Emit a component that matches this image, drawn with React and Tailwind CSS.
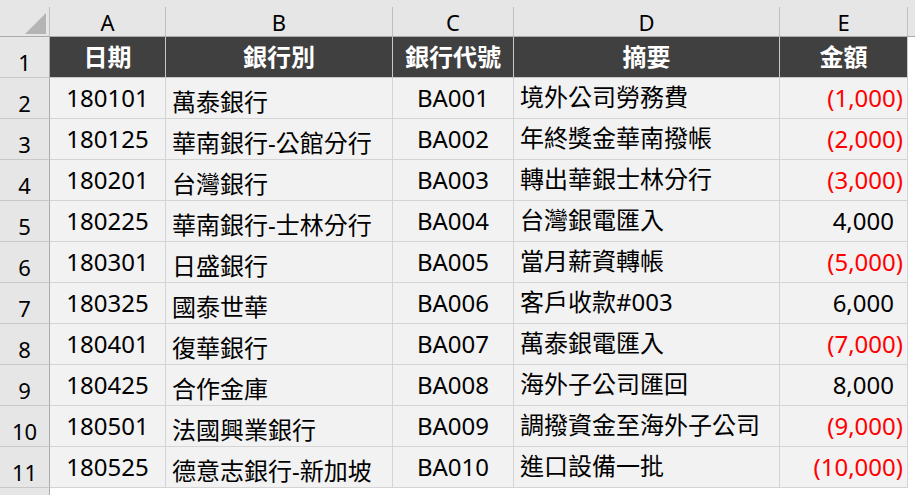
const columns = [
  { key: 'A', width: 'w-[116px]', title: '日期' },
  { key: 'B', width: 'w-[227px]', title: '銀行別' },
  { key: 'C', width: 'w-[121px]', title: '銀行代號' },
  { key: 'D', width: 'w-[266px]', title: '摘要' },
  { key: 'E', width: 'w-[128px]', title: '金額' },
];

const rows = [
  ['180101', '萬泰銀行', 'BA001', '境外公司勞務費', -1000],
  ['180125', '華南銀行-公館分行', 'BA002', '年終獎金華南撥帳', -2000],
  ['180201', '台灣銀行', 'BA003', '轉出華銀士林分行', -3000],
  ['180225', '華南銀行-士林分行', 'BA004', '台灣銀電匯入', 4000],
  ['180301', '日盛銀行', 'BA005', '當月薪資轉帳', -5000],
  ['180325', '國泰世華', 'BA006', '客戶收款#003', 6000],
  ['180401', '復華銀行', 'BA007', '萬泰銀電匯入', -7000],
  ['180425', '合作金庫', 'BA008', '海外子公司匯回', 8000],
  ['180501', '法國興業銀行', 'BA009', '調撥資金至海外子公司', -9000],
  ['180525', '德意志銀行-新加坡', 'BA010', '進口設備一批', -10000],
];

function formatAmount(value) {
  const text = Math.abs(value).toLocaleString('en-US');
  return value < 0 ? `(${text})` : text;
}

function RowHeader({ children }) {
  return (
    <div className="w-[50px] h-full shrink-0 bg-[#e6e6e6] border-r border-b border-r-[#ababab] border-b-[#c8c8c8] flex items-end justify-center pb-[4px] text-[22px] leading-none text-black">
      {children}
    </div>
  );
}

export default function App() {
  return (
    <div
      className="w-[915px] h-[495px] bg-white overflow-hidden flex flex-col"
      style={{ fontFamily: '"Noto Sans", "Noto Sans CJK TC", sans-serif' }}
    >
      {/* column letters */}
      <div className="h-[37px] shrink-0 bg-[#e6e6e6] border-b border-[#ababab] flex">
        <div className="w-[50px] h-[29px] self-end border-r border-[#c0c0c0] flex items-end justify-end pr-[3px] pb-[2px]">
          <svg width="21" height="21" viewBox="0 0 21 21">
            <polygon points="21,0 21,21 0,21" fill="#b4b4b4" />
          </svg>
        </div>
        {columns.map((col) => (
          <div
            key={col.key}
            className={`${col.width} h-[29px] self-end border-r border-[#c0c0c0] flex items-center justify-center text-[22px] leading-none text-black`}
          >
            {col.key}
          </div>
        ))}
      </div>

      {/* header row */}
      <div className="h-[41px] shrink-0 flex">
        <RowHeader>1</RowHeader>
        {columns.map((col) => (
          <div
            key={col.key}
            className={`${col.width} h-full bg-[#404040] border-r border-b border-[#c8c8c8] flex items-center justify-center text-[24px] font-bold text-white leading-none`}
          >
            {col.title}
          </div>
        ))}
      </div>

      {rows.map((row, i) => (
        <div key={row[2]} className="h-[41px] shrink-0 flex">
          <RowHeader>{i + 2}</RowHeader>
          <div className="w-[116px] h-full bg-[#f2f2f2] border-r border-b border-[#d4d4d4] flex items-center justify-center text-[24px] leading-none text-black">
            {row[0]}
          </div>
          <div className="w-[227px] h-full bg-[#f2f2f2] border-r border-b border-[#d4d4d4] flex items-end pl-[6px] pb-[4px] text-[24px] leading-none text-black whitespace-nowrap">
            {row[1]}
          </div>
          <div className="w-[121px] h-full bg-[#f2f2f2] border-r border-b border-[#d4d4d4] flex items-center justify-center text-[24px] leading-none text-black">
            {row[2]}
          </div>
          <div className="w-[266px] h-full bg-[#f2f2f2] border-r border-b border-[#d4d4d4] flex items-center pl-[6px] pb-[2px] text-[24px] leading-none text-black whitespace-nowrap">
            {row[3]}
          </div>
          <div
            className={`w-[128px] h-full bg-[#f2f2f2] border-r border-b border-[#d4d4d4] flex items-center justify-end text-[24px] leading-none ${
              row[4] < 0 ? 'pr-[4px] text-[#ff0000]' : 'pr-[13px] text-black'
            }`}
          >
            {formatAmount(row[4])}
          </div>
        </div>
      ))}

      <div className="flex-1 flex">
        <div className="w-[50px] h-full bg-[#e6e6e6] border-r border-[#ababab]" />
      </div>
    </div>
  );
}
